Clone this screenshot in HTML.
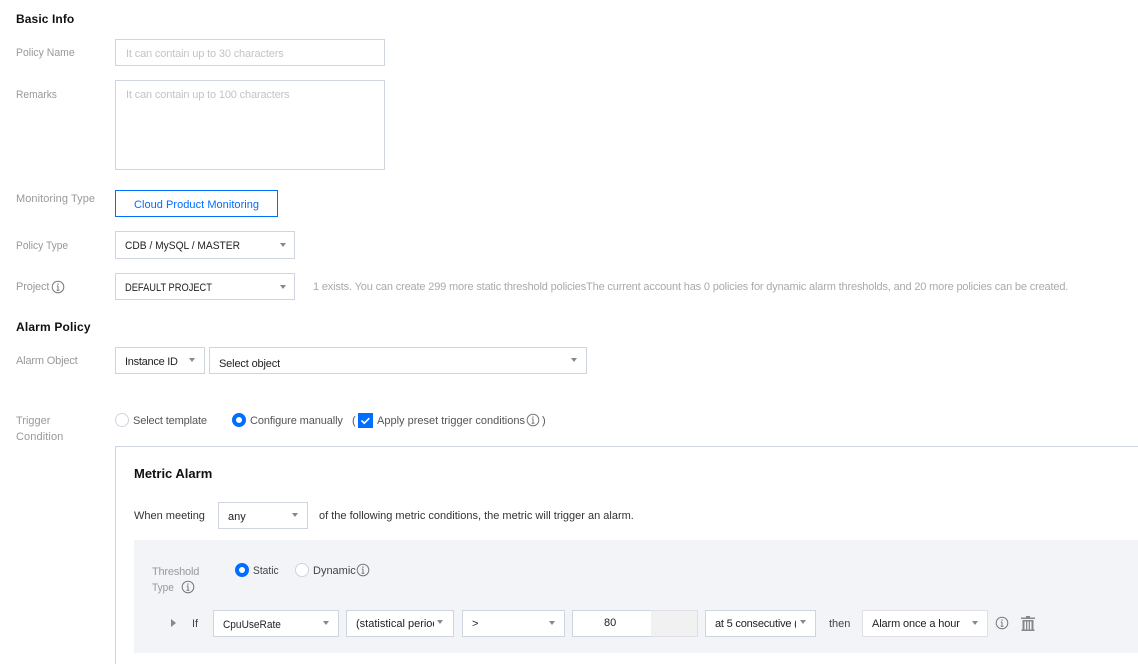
<!DOCTYPE html>
<html>
<head>
<meta charset="utf-8">
<style>
html,body{margin:0;padding:0;background:#fff;width:1138px;height:664px;overflow:hidden}
#w{position:absolute;left:0;top:0;width:1138px;height:664px;overflow:hidden;font-family:"Liberation Sans",sans-serif;font-size:11px;color:#444}
.t{position:absolute;white-space:nowrap;line-height:16px;transform-origin:0 50%}
.h{font-weight:bold;font-size:12px;color:#111;line-height:14px}
.l{color:#999}
.p{color:#c4c4c4}
.b{position:absolute;box-sizing:border-box;border:1px solid #cfd5de;background:#fff}
.s{position:absolute;box-sizing:border-box;border:1px solid #cfd5de;background:#fff;color:#222}
.s span{position:absolute;left:9px;top:6px;line-height:16px;white-space:nowrap;overflow:hidden;transform-origin:0 50%}
.s i{position:absolute;top:11px;width:0;height:0;border-left:3.75px solid transparent;border-right:3.75px solid transparent;border-top:4.5px solid #888}
svg{position:absolute;display:block}
.r{position:absolute;box-sizing:border-box;width:14px;height:14px;border-radius:50%;border:1px solid #cfd5de;background:#fff}
.r.on{border:4px solid #006eff}
</style>
</head>
<body>
<div id="w">
<div class="t h" style="left:16px;top:12px;letter-spacing:.1px">Basic Info</div>
<div class="t l" style="left:16px;top:45px;transform:scaleX(.95)">Policy Name</div>
<div class="b" style="left:115px;top:39px;width:270px;height:27px"></div>
<div class="t p" style="left:126px;top:46px;letter-spacing:-.15px">It can contain up to 30 characters</div>
<div class="t l" style="left:16px;top:87px;transform:scaleX(.93)">Remarks</div>
<div class="b" style="left:115px;top:80px;width:270px;height:90px"></div>
<div class="t p" style="left:126px;top:87px;letter-spacing:-.15px">It can contain up to 100 characters</div>
<div class="t l" style="left:16px;top:191px;letter-spacing:.07px">Monitoring Type</div>
<div class="b" style="left:115px;top:190px;width:163px;height:27px;border-color:#006eff"></div>
<div class="t" style="left:134px;top:197px;color:#006eff;letter-spacing:.04px">Cloud Product Monitoring</div>
<div class="t l" style="left:16px;top:238px;transform:scaleX(.93)">Policy Type</div>
<div class="s" style="left:115px;top:231px;width:180px;height:28px"><span style="transform:scaleX(.93)">CDB / MySQL / MASTER</span><i style="left:163.500px"></i></div>
<div class="t l" style="left:16px;top:279px;letter-spacing:-.14px">Project</div>
<svg style="left:51px;top:280px" width="14" height="14" viewBox="0 0 14 14" fill="none" stroke="#777"><circle cx="7" cy="7" r="5.800"/><path d="M7 6v4.200M5.800 6H7M5.600 10.200h2.800"/><path d="M7 3.500v1.200" stroke-width="1.300"/></svg>
<div class="s" style="left:115px;top:273px;width:180px;height:27px"><span style="transform:scaleX(.845)">DEFAULT PROJECT</span><i style="left:163.500px"></i></div>
<div class="t" style="left:313px;top:279px;color:#aaa;letter-spacing:-.16px">1 exists. You can create 299 more static threshold policiesThe current account has 0 policies for dynamic alarm thresholds, and 20 more policies can be created.</div>
<div class="t h" style="left:16px;top:320px;letter-spacing:.17px">Alarm Policy</div>
<div class="t l" style="left:16px;top:353px;letter-spacing:-.17px">Alarm Object</div>
<div class="s" style="left:115px;top:347px;width:90px;height:27px"><span style="letter-spacing:-.27px">Instance ID</span><i style="left:73px;top:10px"></i></div>
<div class="s" style="left:209px;top:347px;width:378px;height:27px"><span style="top:8px;letter-spacing:-.15px">Select object</span><i style="left:361px;top:10px"></i></div>
<div class="t l" style="left:16px;top:413px">Trigger</div>
<div class="t l" style="left:16px;top:429px;letter-spacing:.1px">Condition</div>
<div class="r" style="left:115px;top:413px"></div>
<div class="t" style="left:133px;top:413px;color:#555;letter-spacing:-.13px">Select template</div>
<div class="r on" style="left:232px;top:413px"></div>
<div class="t" style="left:250px;top:413px;color:#555;letter-spacing:-.11px">Configure manually</div>
<div class="t" style="left:352px;top:413px;color:#555">(</div>
<svg style="left:358px;top:413px" width="15" height="15" viewBox="0 0 15 15"><rect width="15" height="15" fill="#006eff"/><path d="M3.500 7.500l2.800 2.700 5-5" fill="none" stroke="#fff" stroke-width="1.600"/></svg>
<div class="t" style="left:377px;top:413px;color:#555">Apply preset trigger conditions</div>
<svg style="left:526px;top:413px" width="14" height="14" viewBox="0 0 14 14" fill="none" stroke="#777"><circle cx="7" cy="7" r="5.800"/><path d="M7 6v4.200M5.800 6H7M5.600 10.200h2.800"/><path d="M7 3.500v1.200" stroke-width="1.300"/></svg>
<div class="t" style="left:542px;top:413px;color:#555">)</div>
<div style="position:absolute;box-sizing:border-box;left:115px;top:446px;width:1040px;height:240px;border:1px solid #cfd5de"></div>
<div class="t h" style="left:134px;top:467px;font-size:13px">Metric Alarm</div>
<div class="t" style="left:134px;top:508px;color:#333">When meeting</div>
<div class="s" style="left:218px;top:502px;width:90px;height:27px"><span style="top:6px">any</span><i style="left:73px;top:10px"></i></div>
<div class="t" style="left:319px;top:508px;color:#333">of the following metric conditions, the metric will trigger an alarm.</div>
<div style="position:absolute;left:134px;top:540px;width:1004px;height:113px;background:#f2f4f8"></div>
<div class="t l" style="left:152px;top:564px;letter-spacing:-.2px">Threshold</div>
<div class="t l" style="left:152px;top:580px;transform:scaleX(.92)">Type</div>
<svg style="left:181px;top:580px" width="14" height="14" viewBox="0 0 14 14" fill="none" stroke="#777"><circle cx="7" cy="7" r="5.800"/><path d="M7 6v4.200M5.800 6H7M5.600 10.200h2.800"/><path d="M7 3.500v1.200" stroke-width="1.300"/></svg>
<div class="r on" style="left:235px;top:563px"></div>
<div class="t" style="left:253px;top:563px;color:#444;transform:scaleX(.93)">Static</div>
<div class="r" style="left:295px;top:563px"></div>
<div class="t" style="left:313px;top:563px;color:#444">Dynamic</div>
<svg style="left:356px;top:563px" width="14" height="14" viewBox="0 0 14 14" fill="none" stroke="#777"><circle cx="7" cy="7" r="5.800"/><path d="M7 6v4.200M5.800 6H7M5.600 10.200h2.800"/><path d="M7 3.500v1.200" stroke-width="1.300"/></svg>
<div style="position:absolute;left:171px;top:619px;width:0;height:0;border-top:4px solid transparent;border-bottom:4px solid transparent;border-left:5px solid #888"></div>
<div class="t" style="left:192px;top:616px;color:#444">If</div>
<div class="s" style="left:213px;top:610px;width:126px;height:27px"><span style="top:6px;transform:scaleX(.92)">CpuUseRate</span><i style="left:109px;top:10px"></i></div>
<div class="s" style="left:346px;top:610px;width:108px;height:27px"><span style="width:78px;top:5px">(statistical period)</span><i style="left:90px;top:9px"></i></div>
<div class="s" style="left:462px;top:610px;width:103px;height:27px"><span style="top:5px">&gt;</span><i style="left:86px;top:10px"></i></div>
<div class="s" style="left:572px;top:610px;width:80px;height:27px"><span style="left:31px;top:4px">80</span></div>
<div style="position:absolute;box-sizing:border-box;left:651px;top:610px;width:47px;height:27px;background:#f1f1f1;border:1px solid #dde0e5;border-left:0"></div>
<div class="s" style="left:705px;top:610px;width:111px;height:27px"><span style="width:81px;top:5px;letter-spacing:-.2px">at 5 consecutive (data points)</span><i style="left:94px;top:9px"></i></div>
<div class="t" style="left:829px;top:616px;color:#444">then</div>
<div class="s" style="left:862px;top:610px;width:126px;height:27px;border-color:#dde0e5"><span style="top:5px;letter-spacing:-.12px">Alarm once a hour</span><i style="left:109px;top:10px"></i></div>
<svg style="left:995px;top:616px" width="14" height="14" viewBox="0 0 14 14" fill="none" stroke="#777"><circle cx="7" cy="7" r="5.800"/><path d="M7 6v4.200M5.800 6H7M5.600 10.200h2.800"/><path d="M7 3.500v1.200" stroke-width="1.300"/></svg>
<svg style="left:1020px;top:615px" width="16" height="16" viewBox="0 0 16 16" fill="#888"><path d="M6 1h4v1.500h5V4H1V2.500h5zM2.500 5h11v9.500h1V16h-13v-1.500h1zM4.500 6.500V14.500h1.500V6.500zM7.300 6.500V14.500h1.400V6.500zM10 6.500V14.500h1.500V6.500z" fill-rule="evenodd"/></svg>
</div>
</body>
</html>
